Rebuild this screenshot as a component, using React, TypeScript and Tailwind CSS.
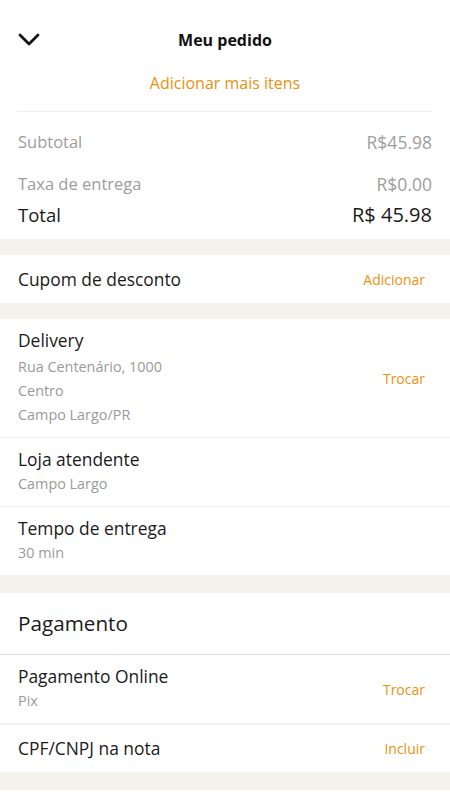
import React from "react";

const font = { fontFamily: '"Open Sans", "Noto Sans", sans-serif' };

function Band({ h = "h-4" }: { h?: string }) {
  return <div className={`${h} bg-[#f5f1ec]`} />;
}

function Row({
  title,
  lines = [],
  action,
  border = true,
  wide = false,
}: {
  title: string;
  lines?: string[];
  action?: string;
  border?: boolean;
  wide?: boolean;
}) {
  return (
    <div className={`flex items-center justify-between pl-[18px] pr-[25px] ${border ? "border-b border-[#ececec]" : ""}`}>
      <div className={`flex flex-col pb-[10px] ${wide ? "pt-[6px]" : "pt-[8px]"}`}>
        <span className={`text-[17.4px] ${wide ? "leading-[30px]" : "leading-[26px]"} text-[#1a1a1a]`}>{title}</span>
        {lines.map((l) => (
          <span key={l} className="text-[14.4px] leading-[24px] text-[#9a9a9a]">
            {l}
          </span>
        ))}
      </div>
      {action && <span className="text-[14px] text-[#e8920e]">{action}</span>}
    </div>
  );
}

export default function App() {
  return (
    <div className="w-[450px] min-h-[800px] bg-white" style={font}>
      <header className="relative flex items-center justify-center h-[80px] pt-0">
        <svg className="absolute left-[18px] top-[33px]" width="22" height="14" viewBox="0 0 22 14" fill="none">
          <path d="M2 2l9 9 9-9" stroke="#111" strokeWidth="2.8" strokeLinecap="round" strokeLinejoin="round" />
        </svg>
        <span className="absolute top-[28px] text-[16px] font-bold text-[#111]">Meu pedido</span>
      </header>
      <div className="flex justify-center -mt-[9px] pb-[16px]">
        <span className="text-[16px] text-[#e8920e]">Adicionar mais itens</span>
      </div>
      <div className="mx-[17px] border-t border-[#efefef]" />
      <div className="px-[18px] pt-[17px] pb-[10px] flex flex-col">
        <div className="flex justify-between text-[16.5px] text-[#9d9d9d] leading-[26px]">
          <span>Subtotal</span>
          <span className="text-[17.5px]">R$45.98</span>
        </div>
        <div className="flex justify-between text-[16.5px] text-[#9d9d9d] leading-[26px] mt-[16px]">
          <span>Taxa de entrega</span>
          <span className="text-[17.5px]">R$0.00</span>
        </div>
        <div className="flex justify-between text-[18.5px] text-[#1a1a1a] leading-[28px] mt-[4px]">
          <span>Total</span>
          <span className="text-[20px]">R$ 45.98</span>
        </div>
      </div>
      <Band />
      <div className="flex items-center justify-between h-[48px] pl-[18px] pr-[25px]">
        <span className="text-[17.4px] text-[#1a1a1a]">Cupom de desconto</span>
        <span className="text-[14px] text-[#e8920e]">Adicionar</span>
      </div>
      <Band />
      <Row title="Delivery" lines={["Rua Centenário, 1000", "Centro", "Campo Largo/PR"]} action="Trocar" wide />
      <Row title="Loja atendente" lines={["Campo Largo"]} />
      <Row title="Tempo de entrega" lines={["30 min"]} border={false} />
      <Band h="h-[18px]" />
      <div className="flex items-center h-[62px] pl-[18px] border-b border-[#dedede]">
        <span className="text-[20.7px] text-[#1a1a1a]">Pagamento</span>
      </div>
      <Row title="Pagamento Online" lines={["Pix"]} action="Trocar" border={false} />
      <div className="h-[2px] bg-[#f0f0f0]" />
      <div className="flex items-center justify-between h-[47px] pl-[18px] pr-[25px]">
        <span className="text-[17.4px] text-[#1a1a1a]">CPF/CNPJ na nota</span>
        <span className="text-[14px] text-[#e8920e]">Incluir</span>
      </div>
      <Band h="h-[18px]" />
    </div>
  );
}
